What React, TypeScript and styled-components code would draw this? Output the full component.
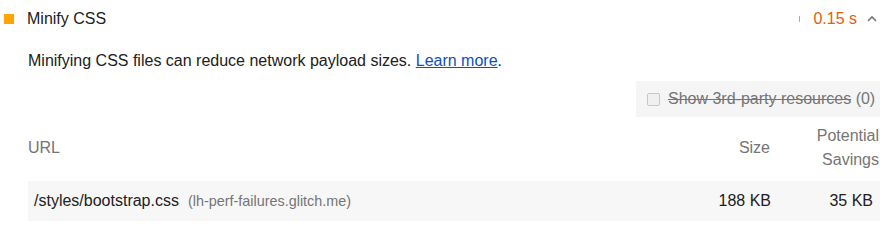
import React from "react";
import styled, { createGlobalStyle } from "styled-components";

const GlobalStyle = createGlobalStyle`
  body {
    margin: 0;
    background: #fff;
    font-family: "Liberation Sans", Arial, sans-serif;
    color: #212121;
  }
`;

const Audit = styled.div`
  width: 880px;
`;

const AuditHeader = styled.div`
  display: flex;
  align-items: center;
  height: 38px;
  font-size: 16px;
`;

const StatusIcon = styled.span`
  width: 10px;
  height: 10px;
  margin-left: 4px;
  background: #ffa400;
`;

const AuditTitle = styled.span`
  margin-left: 13px;
  flex: 1;
`;

const Tick = styled.span`
  width: 1px;
  height: 6px;
  background: #ffa400;
  margin-right: 13px;
`;

const DisplayValue = styled.span`
  color: #e35d0b;
  margin-right: 10px;
`;

const Chevron = styled.svg`
  width: 10px;
  height: 10px;
  margin-right: 3px;
`;

const Body = styled.div`
  padding-left: 28px;
`;

const Description = styled.p`
  margin: 3px 0 0;
  font-size: 16px;
  line-height: 40px;
  color: #212121;
`;

const Link = styled.a`
  color: #0c4fbf;
  text-decoration: underline;
`;

const FilterBar = styled.div`
  display: flex;
  justify-content: flex-end;
`;

const FilterPanel = styled.label`
  display: flex;
  align-items: center;
  width: 244px;
  height: 36px;
  box-sizing: border-box;
  padding-left: 11px;
  background: #f5f5f5;
  color: #757575;
  font-size: 16px;
`;

const Box = styled.span`
  width: 11px;
  height: 11px;
  border: 1px solid #c8c8c8;
  border-radius: 2px;
  background: #f0f0f0;
  margin-right: 8px;
`;

const Struck = styled.span`
  text-decoration: line-through;
`;

const Table = styled.div`
  display: grid;
  grid-template-columns: 1fr 100px 109px;
  margin-top: 2px;
  font-size: 16px;
`;

const HeadCell = styled.div<{ $right?: boolean }>`
  display: flex;
  align-items: center;
  justify-content: ${(p) => (p.$right ? "flex-end" : "flex-start")};
  text-align: ${(p) => (p.$right ? "right" : "left")};
  box-sizing: border-box;
  height: 62px;
  padding-bottom: 4px;
  line-height: 24px;
  color: #757575;
  padding-right: ${(p) => (p.$right ? "1px" : "0")};
`;

const Cell = styled.div<{ $right?: boolean }>`
  display: flex;
  align-items: center;
  justify-content: ${(p) => (p.$right ? "flex-end" : "flex-start")};
  height: 40px;
  background: #f7f7f7;
  padding: 0 ${(p) => (p.$right ? "7px" : "0")} 0 ${(p) => (p.$right ? "0" : "6px")};
  color: #212121;
`;

const SizeCell = styled(Cell)`
  padding-right: 0;
`;

const Host = styled.span`
  margin-left: 9px;
  font-size: 14.4px;
  color: #757575;
`;

export default function App() {
  return (
    <Audit>
      <GlobalStyle />
      <AuditHeader>
        <StatusIcon />
        <AuditTitle>Minify CSS</AuditTitle>
        <Tick />
        <DisplayValue>0.15 s</DisplayValue>
        <Chevron viewBox="0 0 10 10">
          <path d="M1 7 L5 3 L9 7" fill="none" stroke="#757575" strokeWidth="1.6" />
        </Chevron>
      </AuditHeader>
      <Body>
        <Description>
          Minifying CSS files can reduce network payload sizes. <Link>Learn more</Link>.
        </Description>
        <FilterBar>
          <FilterPanel>
            <Box />
            <Struck>Show 3rd-party resources</Struck>&nbsp;(0)
          </FilterPanel>
        </FilterBar>
        <Table>
          <HeadCell>URL</HeadCell>
          <HeadCell $right>Size</HeadCell>
          <HeadCell $right>
            Potential
            <br />
            Savings
          </HeadCell>
          <Cell>
            /styles/bootstrap.css<Host>(lh-perf-failures.glitch.me)</Host>
          </Cell>
          <SizeCell $right>188 KB</SizeCell>
          <Cell $right>35 KB</Cell>
        </Table>
      </Body>
    </Audit>
  );
}
